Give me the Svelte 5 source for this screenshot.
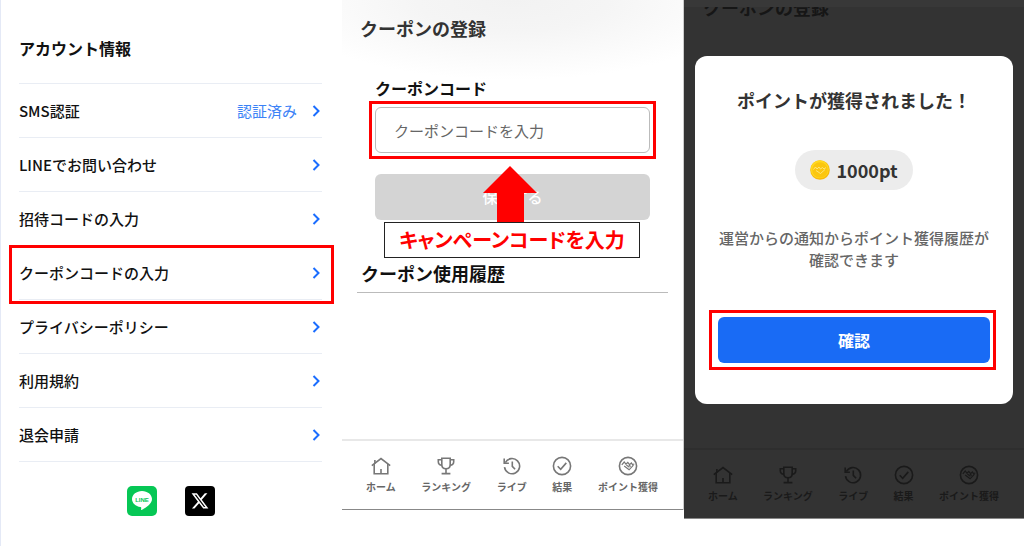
<script lang="ts">
  // Three-step guide: account menu, coupon form, points confirmation.
  type MenuItem = {
    label: string;
    status?: string;
    marked?: boolean;
  };

  const menu: MenuItem[] = [
    { label: "SMS認証", status: "認証済み" },
    { label: "LINEでお問い合わせ" },
    { label: "招待コードの入力" },
    { label: "クーポンコードの入力", marked: true },
    { label: "プライバシーポリシー" },
    { label: "利用規約" },
    { label: "退会申請" },
  ];

  const tabs = [
    { icon: "home", label: "ホーム" },
    { icon: "trophy", label: "ランキング" },
    { icon: "history", label: "ライブ" },
    { icon: "check", label: "結果" },
    { icon: "points", label: "ポイント獲得" },
  ];

  let code = $state("");
</script>

{#snippet tabIcon(name: string)}
  <svg
    viewBox="0 0 20 20"
    width="20"
    height="20"
    fill="none"
    stroke="currentColor"
    stroke-width="1.6"
    aria-hidden="true"
  >
    {#if name === "home"}
      <path d="M.8 9.6 10 2.6l9.2 7" />
      <path d="M3.2 8v9.8h13.6V8M3.9 7.6V3.9M10 17.5v-4.6" />
    {:else if name === "trophy"}
      <path d="M5.8 2.2h8.4v6.3c0 2.6-1.8 4.3-4.2 4.3s-4.2-1.7-4.2-4.3Z" />
      <path d="M5.8 3.7H2.3v2c0 2 1.2 3.3 3.7 3.6M14.2 3.7h3.5v2c0 2-1.2 3.3-3.7 3.6" />
      <path d="M10 12.8v4.6M5.6 17.6h8.8" />
    {:else if name === "history"}
      <path d="M3.3 6.6a7.6 7.6 0 1 1-.8 4.6" />
      <path d="M2.2 2.6v4.6h4.7M10.3 5.6v4.8l2.8 2.9" />
    {:else if name === "check"}
      <circle cx="10" cy="10" r="8.6" />
      <path d="m5.700 10.200 3 3.100 5.600-6.400" />
    {:else}
      <circle cx="10" cy="10" r="8.6" />
      <path
        d="m3.800 8.800 2.400-2.800 1.700 2.200 1.900-1.700 1.700 2.200 1.900-1.700 1 1.600 1.900-.6M6.200 10l4.900 3.800 4.400-4.600M8.400 9l3 2.400M10.800 9l1.900 1.500"
        stroke-width="1.200"
      />
    {/if}
  </svg>
{/snippet}

{#snippet tabBar()}
  <nav class="tabs">
    {#each tabs as tab}
      <a href="#{tab.icon}">
        {@render tabIcon(tab.icon)}
        <span>{tab.label}</span>
      </a>
    {/each}
  </nav>
{/snippet}

<main class="guide">
  <section class="account">
    <h2>アカウント情報</h2>
    <ul>
      {#each menu as item}
        <li class:marked={item.marked}>
          <a href="#menu">
            <span>{item.label}</span>
            {#if item.status}
              <span class="status">{item.status}</span>
            {/if}
            <svg
              viewBox="0 0 12 12"
              width="12"
              height="12"
              fill="none"
              stroke="currentColor"
              stroke-width="2"
              aria-hidden="true"
            >
              <path d="m3.500 1 5 5-5 5" />
            </svg>
          </a>
        </li>
      {/each}
    </ul>
    <div class="social">
      <a href="#line" aria-label="LINE">
        <svg viewBox="0 0 30 30" width="30" height="30">
          <rect width="30" height="30" rx="5" fill="#06c755" />
          <path
            d="M15 5C9.500 5 5 8.600 5 13.100c0 4 3.600 7.400 8.400 8 1 .2.900.7.700 2-.1.800.1 1.100.9.700 4.500-2.400 10-6 10-10.700C25 8.600 20.500 5 15 5Z"
            fill="#fff"
          />
          <text x="15" y="15.500" text-anchor="middle" class="line-word">LINE</text>
        </svg>
      </a>
      <a href="#x" aria-label="X">
        <svg viewBox="0 0 30 30" width="30" height="30">
          <rect width="30" height="30" rx="4" fill="#000" />
          <path
            transform="translate(5.600 5.600) scale(.78)"
            d="M18.244 2.250h3.308l-7.227 8.260 8.502 11.240H16.170l-5.214-6.817L4.990 21.750H1.680l7.730-8.835L1.254 2.250H8.080l4.713 6.231zm-1.161 17.520h1.833L7.084 4.126H5.117z"
            fill="#fff"
          />
        </svg>
      </a>
    </div>
  </section>

  <section class="coupon">
    <h2>クーポンの登録</h2>
    <form onsubmit={(e) => e.preventDefault()}>
      <label for="code">クーポンコード</label>
      <div class="field marked">
        <input id="code" type="text" placeholder="クーポンコードを入力" bind:value={code} />
      </div>
      <div class="submit">
        <button type="submit">保存する</button>
        <svg class="arrow" viewBox="0 0 54 56" width="54" height="56" aria-hidden="true">
          <path d="M27 0 54 27H41V56H14V27H0Z" fill="#f00" />
        </svg>
      </div>
    </form>
    <p class="note">キャンペーンコードを入力</p>
    <h3>クーポン使用履歴</h3>
    {@render tabBar()}
  </section>

  <section class="done">
    <div class="scrolled">
      <h2>クーポンの登録</h2>
    </div>
    <div class="dialog" role="dialog" aria-labelledby="done-title">
      <h2 id="done-title">ポイントが獲得されました！</h2>
      <p class="amount">
        <svg viewBox="0 0 20 20" width="20" height="20" aria-hidden="true">
          <circle cx="10" cy="10" r="9.800" fill="#f9b90c" />
          <circle cx="9.700" cy="9.300" r="9" fill="#ffd91f" />
          <circle cx="10" cy="10" r="7.800" fill="#fbc60f" />
          <path
            d="m3.500 9.500 2-2.500 1.500 2 2-2 1.500 2 2-1.500 1.500 1.500 2-1.500M6 10.500l4.500 3 4.500-4"
            fill="none"
            stroke="#fff0a0"
            stroke-width=".7"
          />
        </svg>
        1000pt
      </p>
      <p class="message">運営からの通知からポイント獲得履歴が<br />確認できます</p>
      <div class="confirm marked">
        <button type="button">確認</button>
      </div>
    </div>
    {@render tabBar()}
  </section>
</main>

<style>
  :global(body) {
    margin: 0;
    background: #fff;
  }
  .guide {
    display: grid;
    grid-template-columns: 171fr 171fr 170fr;
    align-items: start;
    min-height: 100vh;
    color: #111;
    font-family: "Noto Sans CJK JP", sans-serif;
    font-size: 15px;
    font-weight: 500;
    line-height: 24px;
  }
  .guide * {
    box-sizing: border-box;
  }
  h2,
  h3,
  p,
  ul {
    margin: 0;
    padding: 0;
  }
  h2,
  h3 {
    font-size: 18px;
    font-weight: 700;
  }
  a {
    color: inherit;
    text-decoration: none;
  }
  svg {
    display: block;
    flex: none;
  }
  button,
  input {
    display: block;
    width: 100%;
    height: 46px;
    border-radius: 6px;
    font: inherit;
  }
  button {
    border: 0;
    color: #fff;
  }

  /* Red frame around the thing to tap, drawn over its neighbours. */
  .marked {
    position: relative;
  }
  .marked::after {
    content: "";
    position: absolute;
    inset: -6px;
    border: 3px solid #f00;
    pointer-events: none;
  }

  .account {
    align-self: stretch;
    padding: 36px 20px 30px 18px;
    border-left: 1px solid #e4e9f6;
  }
  .account h2 {
    margin-bottom: 23px;
    font-size: 16px;
  }
  .account ul {
    border-top: 1px solid #e9edf4;
    list-style: none;
  }
  .account li a {
    display: flex;
    align-items: center;
    height: 54px;
    border-bottom: 1px solid #e9edf4;
  }
  .account li span:first-child {
    flex: 1;
  }
  .account li svg {
    color: #1a6dff;
  }
  .account li.marked::after {
    inset: -1px -12px -4px -10px;
  }
  .status {
    margin-right: 13px;
    color: #3b82f6;
    font-weight: 400;
  }
  .social {
    display: flex;
    justify-content: center;
    gap: 28px;
    margin-top: 24px;
  }
  .line-word {
    fill: #06c755;
    font: 700 6px "Liberation Sans", sans-serif;
  }

  .coupon {
    padding-top: 16px;
    border-right: 1px solid #ccc;
    background: radial-gradient(ellipse 70% 80px at 50% 0, #f2f2f2, #f5f5f5 40%, #fff) no-repeat;
  }
  .coupon h2 {
    padding: 0 18px;
    color: #333;
  }
  form {
    padding: 36px 33px 0;
  }
  label {
    display: block;
    margin-bottom: 7px;
    font-size: 16px;
    font-weight: 700;
  }
  input {
    padding: 0 18px;
    border: 1px solid #bbb;
    background: #fff;
    color: #333;
    font-weight: 400;
  }
  input::placeholder {
    color: #666;
    opacity: 1;
  }
  .submit {
    position: relative;
    margin-top: 21px;
  }
  .submit button {
    background: #d4d4d4;
  }
  .arrow {
    position: absolute;
    top: -8px;
    left: 50%;
    margin-left: -30px;
  }
  .note {
    margin: 2px 43px 0 42px;
    padding: 5px 0;
    border: 1px solid #222;
    background: #fff;
    color: #f00;
    font-feature-settings: "palt";
    font-size: 20px;
    font-weight: 700;
    text-align: center;
  }
  h3 {
    margin: 0 15px 146px;
    padding: 3px 4px 7px;
    border-bottom: 1px solid #bbb;
  }

  .tabs {
    display: flex;
    justify-content: space-between;
    padding: 15px 25px 14px 24px;
    border-top: 2px solid #e8e8e8;
    border-bottom: 1px solid #888;
    color: #777;
    font-size: 10px;
    font-weight: 700;
    line-height: 16px;
  }
  .tabs a {
    display: flex;
    flex-direction: column;
    align-items: center;
    gap: 3px;
  }
  .tabs span {
    color: #666;
  }

  .done {
    background: #333;
  }
  /* Page title half hidden under the top bar. */
  .scrolled {
    overflow: hidden;
    height: 56px;
    border-top: 7px solid #383838;
  }
  .scrolled h2 {
    margin-top: -12px;
    padding: 0 19px;
    color: #161616;
  }
  .dialog {
    margin: 0 11px 44px;
    padding: 32px 23px 41px;
    border-radius: 12px;
    background: #fff;
    color: #333;
    text-align: center;
  }
  .amount {
    display: flex;
    align-items: center;
    justify-content: center;
    gap: 6px;
    width: fit-content;
    height: 40px;
    margin: 38px auto 37px;
    padding: 0 15px;
    border-radius: 20px;
    background: #ececec;
    font-size: 18px;
    font-weight: 700;
  }
  .message {
    color: #666;
    line-height: 22px;
  }
  .confirm {
    margin-top: 46px;
  }
  .confirm.marked::after {
    inset: -7px -6px -7px -9px;
  }
  .confirm button {
    background: #196bf5;
    font-size: 16px;
    font-weight: 700;
  }
  .done .tabs {
    border-top-color: #2e2e2e;
    color: #1a1a1a;
  }
  .done .tabs span {
    color: #1a1a1a;
  }
</style>
